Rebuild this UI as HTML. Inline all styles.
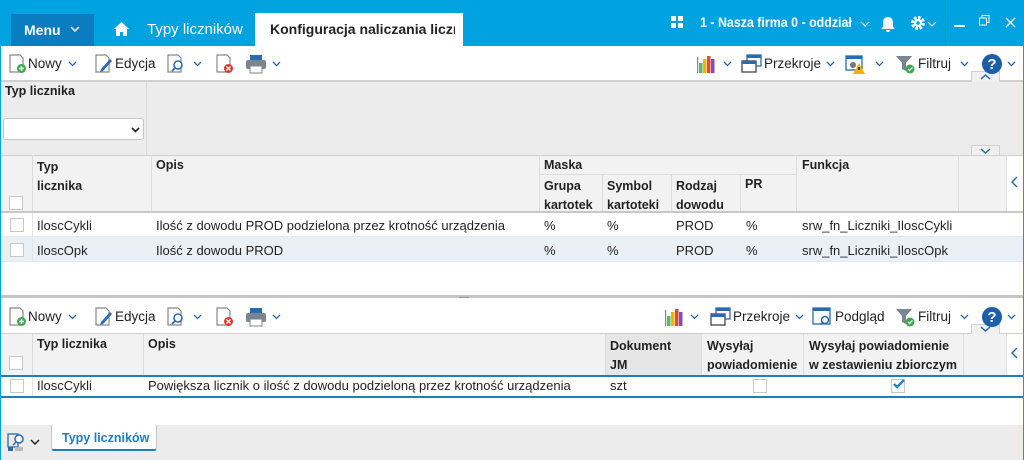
<!DOCTYPE html>
<html><head><meta charset="utf-8"><style>
*{margin:0;padding:0;box-sizing:border-box}
body{width:1024px;height:460px;overflow:hidden;position:relative;background:#fff;font-family:"Liberation Sans",sans-serif;font-size:13px;color:#222}
.a{position:absolute}
.t{position:absolute;white-space:nowrap}
.b{font-weight:bold}
.hd{position:absolute;background:#f2f2f2}
.vl{position:absolute;width:1px;background:#dcdcdc}
.hl{position:absolute;height:1px;background:#dcdcdc}
.cb{position:absolute;width:14px;height:14px;border:1px solid #c8c8c8;background:#fff}
.w{color:#fff}
</style></head><body>
<div class="a" style="left:0;top:0;width:1024px;height:46px;background:#00a3e0"></div>
<div class="a" style="left:11px;top:14px;width:83px;height:32px;background:#0a7cc0"></div>
<div class="t b w" style="left:24px;top:22px;font-size:14px">Menu</div>
<svg class="a" style="left:70px;top:26px" width="10" height="7"><path d="M1 1l4 4 4-4" stroke="#fff" fill="none" stroke-width="1.5"/></svg>
<svg class="a" style="left:114px;top:22px" width="15" height="14"><path d="M7.5 0L0 7h2v7h4v-4h3v4h4V7h2z" fill="#fff"/></svg>
<div class="t w" style="left:147px;top:21px;font-size:15px">Typy liczników</div>
<div class="a" style="left:255px;top:13px;width:208px;height:34px;background:#fff"></div>
<div class="t b" style="left:270px;top:21px;font-size:14px;color:#222;width:185px;overflow:hidden">Konfiguracja naliczania liczn</div>
<svg class="a" style="left:671px;top:16px" width="12" height="12"><rect x="0" y="0" width="5" height="5" fill="#fff"/><rect x="7" y="0" width="5" height="5" fill="#fff"/><rect x="0" y="7" width="5" height="5" fill="#fff"/><rect x="7" y="7" width="5" height="5" fill="#fff"/></svg>
<div class="t b w" style="left:700px;top:15px;font-size:13.5px;transform:scaleX(0.92);transform-origin:0 0">1 - Nasza firma 0 - oddział</div>
<svg class="a" style="left:860px;top:21px" width="10" height="6"><path d="M1 1l4 4 4-4" stroke="#fff" fill="none"/></svg>
<svg class="a" style="left:881px;top:16px" width="14" height="17"><path d="M7 1c-3 0-5 2-5 6v4l-2 2h14l-2-2V7c0-4-2-6-5-6zM5 14a2 2 0 004 0z" fill="#fff"/></svg>
<svg class="a" style="left:910px;top:15px" width="16" height="16"><circle cx="8" cy="8" r="5" fill="none" stroke="#fff" stroke-width="4" stroke-dasharray="2.5 1.4"/><circle cx="8" cy="8" r="4" fill="#fff"/><circle cx="8" cy="8" r="1.8" fill="#00a3e0"/></svg>
<svg class="a" style="left:927px;top:21px" width="10" height="6"><path d="M1 1l4 4 4-4" stroke="#fff" fill="none"/></svg>
<div class="a" style="left:945px;top:0;width:1px;height:46px;background:#1a8cc8"></div>
<div class="a" style="left:954px;top:25px;width:11px;height:1.5px;background:#fff"></div>
<svg class="a" style="left:979px;top:15px" width="11" height="11"><rect x="0.5" y="3" width="7" height="7" fill="none" stroke="#fff"/><path d="M3 3V0.5h7v7H7.5" fill="none" stroke="#fff"/></svg>
<svg class="a" style="left:1005px;top:17px" width="11" height="11"><path d="M1 1l9 9M10 1l-9 9" stroke="#fff" stroke-width="1.3"/></svg>
<div class="a" style="left:0;top:46px;width:1px;height:414px;background:#00a3e0"></div>
<div class="a" style="left:1023px;top:46px;width:1px;height:414px;background:#00a3e0"></div>

<div class="a" style="left:1px;top:80px;width:1022px;height:2px;background:#d0d0d0"></div>
<div class="a" style="left:1px;top:82px;width:1022px;height:73px;background:#ececec"></div>
<div class="a" style="left:146px;top:82px;width:1px;height:73px;background:#d8d8d8"></div>
<div class="t b" style="left:5px;top:84px;font-size:12.5px">Typ licznika</div>
<div class="a" style="left:3px;top:118px;width:141px;height:22px;background:#fff;border:1px solid #c6c6c6;border-radius:3px"></div>
<svg class="a" style="left:131px;top:127px" width="9" height="6"><path d="M1 1l3.5 3.5L8 1" stroke="#222" fill="none" stroke-width="1.6"/></svg>
<div class="a" style="left:971px;top:71px;width:29px;height:11px;background:#f0f0f0;border:1px solid #d0d0d0;border-bottom:none"></div>
<svg class="a" style="left:980px;top:74px" width="11" height="6"><path d="M1 5l4.5-4 4.5 4" stroke="#2a6ab0" fill="none" stroke-width="1.5"/></svg>
<div class="a" style="left:971px;top:145px;width:29px;height:11px;background:#f0f0f0;border:1px solid #d0d0d0;border-bottom:none"></div>
<svg class="a" style="left:980px;top:148px" width="11" height="6"><path d="M1 1l4.5 4 4.5-4" stroke="#2a6ab0" fill="none" stroke-width="1.5"/></svg>

<div class="hd" style="left:1px;top:155px;width:1005px;height:56px"></div>
<div class="hl" style="left:1px;top:155px;width:1022px;background:#d0d0d0"></div>
<div class="vl" style="left:32px;top:155px;height:57px"></div>
<div class="vl" style="left:151px;top:155px;height:57px"></div>
<div class="vl" style="left:539px;top:155px;height:57px"></div>
<div class="vl" style="left:796px;top:155px;height:57px"></div>
<div class="vl" style="left:958px;top:155px;height:57px"></div>
<div class="vl" style="left:1006px;top:155px;height:57px"></div>
<div class="hl" style="left:539px;top:174px;width:257px"></div>
<div class="vl" style="left:602px;top:174px;height:38px"></div>
<div class="vl" style="left:671px;top:174px;height:38px"></div>
<div class="vl" style="left:740px;top:174px;height:38px"></div>
<div class="t b" style="left:37px;top:158px;font-size:12.5px;line-height:19px">Typ<br>licznika</div>
<div class="t b" style="left:156px;top:158px;font-size:12.5px">Opis</div>
<div class="t b" style="left:544px;top:158px;font-size:12.5px">Maska</div>
<div class="t b" style="left:544px;top:177px;font-size:12.5px;line-height:19px">Grupa<br>kartotek</div>
<div class="t b" style="left:607px;top:177px;font-size:12.5px;line-height:19px">Symbol<br>kartoteki</div>
<div class="t b" style="left:676px;top:177px;font-size:12.5px;line-height:19px">Rodzaj<br>dowodu</div>
<div class="t b" style="left:745px;top:177px;font-size:12.5px">PR</div>
<div class="t b" style="left:802px;top:158px;font-size:12.5px">Funkcja</div>
<svg class="a" style="left:1011px;top:176px" width="7" height="12"><path d="M6 1L1 6l5 5" stroke="#2a6ab0" fill="none" stroke-width="1.5"/></svg>
<div class="cb" style="left:9px;top:196px"></div>
<div class="a" style="left:1px;top:211px;width:1022px;height:2px;background:#c8c8c8"></div>
<div class="a" style="left:1px;top:237px;width:1022px;height:24px;background:#eaf1f6"></div>
<div class="hl" style="left:1px;top:236px;width:1022px;background:#e2e8ee"></div>
<div class="hl" style="left:1px;top:261px;width:1022px;background:#e2e8ee"></div>
<div class="vl" style="left:32px;top:213px;height:48px;background:#e4e4e4"></div>
<div class="cb" style="left:10px;top:218px"></div>
<div class="cb" style="left:10px;top:243px"></div>
<div class="t" style="left:37px;top:218px">IloscCykli</div>
<div class="t" style="left:156px;top:218px">Ilość z dowodu PROD podzielona przez krotność urządzenia</div>
<div class="t" style="left:544px;top:218px">%</div><div class="t" style="left:607px;top:218px">%</div><div class="t" style="left:676px;top:218px">PROD</div><div class="t" style="left:746px;top:218px">%</div>
<div class="t" style="left:802px;top:218px">srw_fn_Liczniki_IloscCykli</div>
<div class="t" style="left:37px;top:243px">IloscOpk</div>
<div class="t" style="left:156px;top:243px">Ilość z dowodu PROD</div>
<div class="t" style="left:544px;top:243px">%</div><div class="t" style="left:607px;top:243px">%</div><div class="t" style="left:676px;top:243px">PROD</div><div class="t" style="left:746px;top:243px">%</div>
<div class="t" style="left:802px;top:243px">srw_fn_Liczniki_IloscOpk</div>

<div class="a" style="left:1px;top:295px;width:1022px;height:3px;background:#c4c4c4"></div>
<div class="a" style="left:459px;top:297px;width:10px;height:1px;background:#999"></div>

<div class="a" style="left:1px;top:333px;width:1022px;height:1px;background:#d0d0d0"></div>
<div class="hd" style="left:1px;top:334px;width:1005px;height:42px"></div>
<div class="vl" style="left:32px;top:334px;height:42px"></div>
<div class="vl" style="left:143px;top:334px;height:42px"></div>
<div class="a" style="left:605px;top:334px;width:96px;height:42px;background:#e6e6e6"></div>
<div class="vl" style="left:605px;top:334px;height:42px"></div>
<div class="vl" style="left:701px;top:334px;height:42px"></div>
<div class="vl" style="left:803px;top:334px;height:42px"></div>
<div class="vl" style="left:963px;top:334px;height:42px"></div>
<div class="vl" style="left:1006px;top:334px;height:42px"></div>
<div class="t b" style="left:37px;top:337px;font-size:12.5px">Typ licznika</div>
<div class="t b" style="left:148px;top:337px;font-size:12.5px">Opis</div>
<div class="t b" style="left:610px;top:337px;font-size:12.5px;line-height:19px">Dokument<br>JM</div>
<div class="t b" style="left:707px;top:337px;font-size:12.5px;line-height:19px">Wysyłaj<br>powiadomienie</div>
<div class="t b" style="left:809px;top:337px;font-size:12.5px;line-height:19px">Wysyłaj powiadomienie<br>w zestawieniu zbiorczym</div>
<svg class="a" style="left:1011px;top:347px" width="7" height="12"><path d="M6 1L1 6l5 5" stroke="#2a6ab0" fill="none" stroke-width="1.5"/></svg>
<div class="cb" style="left:9px;top:356px"></div>
<div class="a" style="left:971px;top:324px;width:29px;height:10px;background:#f0f0f0;border:1px solid #d0d0d0;border-bottom:none"></div>
<svg class="a" style="left:980px;top:326px" width="11" height="6"><path d="M1 1l4.5 4 4.5-4" stroke="#2a6ab0" fill="none" stroke-width="1.5"/></svg>
<div class="a" style="left:1px;top:375px;width:1022px;height:2px;background:#1e7fc0"></div>
<div class="a" style="left:1px;top:396px;width:1022px;height:2px;background:#1e7fc0"></div>
<div class="vl" style="left:32px;top:377px;height:19px;background:#e4e4e4"></div>
<div class="cb" style="left:10px;top:379px"></div>
<div class="t" style="left:37px;top:378px">IloscCykli</div>
<div class="t" style="left:148px;top:378px">Powiększa licznik o ilość z dowodu podzieloną przez krotność urządzenia</div>
<div class="t" style="left:610px;top:378px">szt</div>
<div class="cb" style="left:753px;top:379px"></div>
<div class="cb" style="left:891px;top:379px"></div>
<svg class="a" style="left:892px;top:378px" width="14" height="12"><path d="M2 6l3 3 7-7" stroke="#1a8ad8" fill="none" stroke-width="2.5"/></svg>

<div class="a" style="left:1px;top:425px;width:1022px;height:35px;background:#ececec"></div>
<svg class="a" style="left:7px;top:432px" width="20" height="20"><rect x="1" y="2" width="10" height="13" fill="none" stroke="#2a6ab0" stroke-width="1.3"/><circle cx="12" cy="7" r="4" fill="#fff" stroke="#2a6ab0" stroke-width="1.5"/><path d="M9 10l-3 3" stroke="#2a6ab0" stroke-width="1.5"/><rect x="1" y="15" width="5" height="4" fill="#2a6ab0"/><rect x="8" y="15" width="8" height="4" fill="#bbb"/></svg>
<svg class="a" style="left:30px;top:439px" width="10" height="6"><path d="M1 1l4 4 4-4" stroke="#222" fill="none" stroke-width="1.5"/></svg>
<div class="a" style="left:51px;top:425px;width:106px;height:26px;background:#fff;border:1px solid #c8c8c8;border-top:none;border-bottom:2px solid #1e7fc0;border-radius:0 0 3px 3px"></div>
<div class="t b" style="left:62px;top:431px;color:#1e7fc0;font-size:12.5px">Typy liczników</div>

<div id="tbs"></div>
<script>
function tb(y,second){
 const ic=(x,svg)=>`<svg class="a" style="left:${x}px;top:${y}px" width="22" height="22">${svg}</svg>`;
 const dd=(x,c)=>`<svg class="a" style="left:${x}px;top:${y+8}px" width="9" height="6"><path d="M1 1l3.5 3.5L8 1" stroke="${c||'#2a6ab0'}" fill="none" stroke-width="1.3"/></svg>`;
 const tx=(x,s)=>`<div class="t" style="left:${x}px;top:${y+3}px;font-size:13.5px">${s}</div>`;
 const doc='<path d="M3 2h10l3 3v14H3z" fill="#fff" stroke="#888" stroke-width="1.2"/>';
 let h='';
 h+=ic(7,doc+'<circle cx="14.5" cy="15.5" r="4.5" fill="#3aaa4a"/><path d="M14.5 13v5M12 15.5h5" stroke="#fff" stroke-width="1.5"/>')+tx(28,'Nowy')+dd(68);
 h+=ic(93,doc+'<path d="M8 16l9-10 2 2-9 10-3 1z" fill="#2a6ab0"/>')+tx(115,'Edycja');
 h+=ic(165,'<path d="M3 2h10l3 3v14H3z" fill="#fff" stroke="#888" stroke-width="1.2"/><circle cx="13" cy="12" r="4" fill="#fff" stroke="#2a6ab0" stroke-width="1.6"/><path d="M10 15l-3 3" stroke="#2a6ab0" stroke-width="1.8"/>')+dd(193);
 h+=ic(214,doc+'<circle cx="14.5" cy="15.5" r="4.5" fill="#d9392b"/><path d="M12.5 13.5l4 4M16.5 13.5l-4 4" stroke="#fff" stroke-width="1.3"/>');
 h+=ic(245,'<rect x="5" y="2" width="12" height="6" fill="#2a6ab0"/><rect x="1" y="7" width="20" height="9" rx="2" fill="#7a8590"/><rect x="5" y="13" width="12" height="7" fill="#fff" stroke="#7a8590"/>')+dd(272);
 const chart='<rect x="2" y="4" width="1.2" height="16" fill="#888"/><rect x="4" y="10" width="3.5" height="10" fill="#5cb85c"/><rect x="8" y="6" width="3.5" height="14" fill="#f0b400"/><rect x="12" y="3" width="3.5" height="17" fill="#e04a3a"/><rect x="16" y="6" width="3.5" height="14" fill="#7b4fc9"/>';
 const prz='<rect x="6" y="2" width="14" height="11" fill="#fff" stroke="#2a6ab0" stroke-width="1.3"/><rect x="6" y="2" width="14" height="3" fill="#2a6ab0"/><rect x="1" y="8" width="14" height="11" fill="#fff" stroke="#444" stroke-width="1.3"/><rect x="1" y="8" width="14" height="3" fill="#2a6ab0"/>';
 const filt='<path d="M1 3h16l-6 7v8l-4-2v-6z" fill="#7a8590"/><circle cx="15" cy="16" r="4.5" fill="#3aaa4a"/><path d="M13 16l1.5 1.5 3-3" stroke="#fff" fill="none" stroke-width="1.3"/>';
 const help='<circle cx="11" cy="11" r="10" fill="#1d5ea8"/><text x="11" y="16" font-size="15" font-weight="bold" text-anchor="middle" fill="#fff" font-family="Liberation Sans">?</text>';
 if(!second){
  h+=ic(695,chart)+dd(723);
  h+=ic(741,prz)+tx(764,'Przekroje')+dd(826);
  h+=ic(845,'<rect x="1" y="3" width="16" height="14" fill="#fff" stroke="#2a6ab0" stroke-width="1.3"/><rect x="1" y="3" width="16" height="3" fill="#2a6ab0"/><circle cx="8" cy="12" r="3" fill="#777"/><path d="M14 10l6 11h-12z" fill="#f0b400"/><path d="M14 14v3" stroke="#000" stroke-width="1.3"/>')+dd(875);
  h+=ic(895,filt)+tx(918,'Filtruj')+dd(960);
 }else{
  h+=ic(663,chart)+dd(690);
  h+=ic(710,prz)+tx(733,'Przekroje')+dd(795);
  h+=ic(812,'<rect x="1" y="2" width="17" height="16" fill="#fff" stroke="#2a6ab0" stroke-width="1.3"/><rect x="1" y="2" width="17" height="3" fill="#2a6ab0"/><circle cx="13" cy="14" r="3.5" fill="#fff" stroke="#2a6ab0" stroke-width="1.5"/><path d="M10.5 16.5l-2 2" stroke="#2a6ab0" stroke-width="1.5"/>')+tx(835,'Podgląd');
  h+=ic(895,filt)+tx(918,'Filtruj')+dd(960);
 }
 h+=ic(981,help)+dd(1007);
 return h;
}
document.getElementById('tbs').innerHTML=tb(53,false)+tb(306,true);
</script>
</body></html>
